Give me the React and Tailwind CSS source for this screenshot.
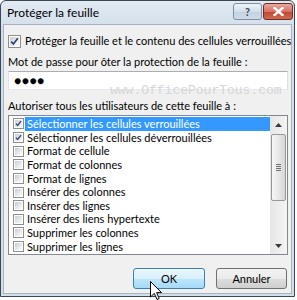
import React from "react";

function Check({ checked, size = 13 }) {
  return (
    <div
      className="shrink-0 border border-[#8e8f8f] bg-white p-[1px]"
      style={{ width: size, height: size }}
    >
      <div className="relative w-full h-full bg-[linear-gradient(135deg,#c9ccd2,#eef0f2_70%,#fbfbfb)]">
        {checked && (
          <svg
            viewBox="0 0 9 9"
            className="absolute inset-0 w-full h-full overflow-visible"
          >
            <path
              d="M1.2 4.6 L3.4 7 L7.8 1.3"
              fill="none"
              stroke="#2c3f7c"
              strokeWidth="1.6"
            />
          </svg>
        )}
      </div>
    </div>
  );
}

const items = [
  ["Sélectionner les cellules verrouillées", true, true],
  ["Sélectionner les cellules déverrouillées", true, false],
  ["Format de cellule", false, false],
  ["Format de colonnes", false, false],
  ["Format de lignes", false, false],
  ["Insérer des colonnes", false, false],
  ["Insérer des lignes", false, false],
  ["Insérer des liens hypertexte", false, false],
  ["Supprimer les colonnes", false, false],
  ["Supprimer les lignes", false, false],
];

function Arrow({ up }) {
  return (
    <svg width="7" height="4" viewBox="0 0 7 4">
      {up ? (
        <path d="M3.5 0 L7 4 L0 4 Z" fill="#3a3a3a" />
      ) : (
        <path d="M0 0 L7 0 L3.5 4 Z" fill="#3a3a3a" />
      )}
    </svg>
  );
}

export default function App() {
  return (
    <div className="relative w-[297px] h-[300px] bg-white font-['Lato',sans-serif] text-black overflow-hidden">
      <div className="w-[295px] h-[297px] border border-[#3c4650] rounded-t-[6px] bg-[linear-gradient(#e2eaf2,#d2deea_30px,#d2deea)] flex flex-col">
        {/* title bar */}
        <div className="h-[23px] flex items-start justify-between shrink-0">
          <div className="pl-[6px] pt-[4px] text-[12px] leading-[16px]">
            Protéger la feuille
          </div>
          <div className="flex gap-[1px] pr-[1px] pt-[2px]">
            <div className="w-[29px] h-[17px] rounded-[3px] border border-[#7e8fa3] bg-[linear-gradient(#eef3f8,#d3deea_50%,#c2d1e1_51%,#cfdce9)] flex items-center justify-center text-[11px] leading-none text-[#3a4a5c] font-bold">
              ?
            </div>
            <div className="w-[30px] h-[17px] rounded-[3px] border border-[#6d2b26] bg-[linear-gradient(#e9a99f,#d47366_50%,#c0452f_51%,#d06a55)] flex items-center justify-center">
              <svg width="11" height="9" viewBox="0 0 11 9">
                <path
                  d="M1.5 1 L9.5 8 M9.5 1 L1.5 8"
                  stroke="#ffffff"
                  strokeWidth="2.4"
                  strokeLinecap="square"
                />
              </svg>
            </div>
          </div>
        </div>

        {/* body */}
        <div className="relative mx-[2px] h-[270px] border border-[#a5b4c3] bg-[#f0f0f0] flex flex-col pl-[4px] text-[11px]">
          <div className="mt-[9px] h-[14px] flex items-center gap-[4px]">
            <Check checked size={13} />
            <span className="leading-[14px] whitespace-nowrap">
              Protéger la feuille et le contenu des cellules verrouillées
            </span>
          </div>
          <div className="mt-[6px] h-[15px] leading-[15px]">
            Mot de passe pour ôter la protection de la feuille :
          </div>
          <div className="mt-[2px] w-[280px] h-[19px] border border-[#abadb3] border-l-[#e2e3ea] border-r-[#dbdfe6] border-b-[#e3e9ef] bg-white flex items-center pl-[5px] text-[12px] tracking-[0.5px] leading-none">
            ●●●●
          </div>
          <div className="mt-[8px] h-[15px] leading-[15px]">
            Autoriser tous les utilisateurs de cette feuille à :
          </div>
          <div className="mt-[2px] w-[280px] h-[140px] border border-[#828790] bg-white flex">
            <div className="flex-1 pt-[1px]">
              {items.map(([label, checked, sel]) => (
                <div key={label} className="h-[13.65px] flex items-center pl-[4px]">
                  <Check checked={checked} size={11} />
                  <div
                    className={
                      "ml-[1px] flex-1 h-full pl-[2px] leading-[13.65px] whitespace-nowrap " +
                      (sel ? "bg-[#3399ff] text-white" : "")
                    }
                  >
                    {label}
                  </div>
                </div>
              ))}
            </div>
            {/* scrollbar */}
            <div className="w-[17px] h-full bg-[linear-gradient(90deg,#e6e6e6,#f4f4f4)] flex flex-col items-center">
              <div className="h-[17px] w-full flex items-center justify-center">
                <Arrow up />
              </div>
              <div className="mt-[1px] w-[15px] h-[67px] rounded-[2px] border border-[#989898] bg-[linear-gradient(90deg,#f6f6f6,#e9e9e9_45%,#d6d6d6)] flex flex-col items-center justify-center gap-[1px]">
                <div className="w-[5px] h-[1px] bg-[#6f6f6f]" />
                <div className="w-[5px] h-[1px] bg-[#6f6f6f]" />
                <div className="w-[5px] h-[1px] bg-[#6f6f6f]" />
                <div className="w-[5px] h-[1px] bg-[#6f6f6f]" />
              </div>
              <div className="flex-1" />
              <div className="h-[17px] w-full flex items-center justify-center">
                <Arrow />
              </div>
            </div>
          </div>
          <div className="mt-[13px] flex gap-[11px] pl-[125px]">
            <div className="w-[72px] h-[21px] rounded-[3px] border border-[#3c7fb1] bg-[linear-gradient(#eaf6fd,#d9f0fc_50%,#bee6fd_51%,#a7d9f5)] flex items-center justify-center leading-none">
              OK
            </div>
            <div className="w-[71px] h-[21px] rounded-[3px] border border-[#707070] bg-[linear-gradient(#f2f2f2,#ebebeb_50%,#dddddd_51%,#cfcfcf)] flex items-center justify-center leading-none">
              Annuler
            </div>
          </div>

          {/* watermark */}
          <div className="pointer-events-none absolute left-[106px] top-[59px] font-['Liberation_Mono',monospace] text-[13px] leading-[14px] text-[#d6d6d6]">
            www.OfficePourTous.com
          </div>
        </div>
      </div>

      {/* mouse cursor */}
      <svg
        className="absolute left-[150px] top-[281px]"
        width="13"
        height="20"
        viewBox="0 0 13 20"
      >
        <path
          d="M0.5 0.5 L0.5 16 L4.3 12.4 L7 18.5 L9.2 17.5 L6.6 11.6 L11.5 11.6 Z"
          fill="#ffffff"
          stroke="#000000"
          strokeWidth="1"
          strokeLinejoin="miter"
        />
      </svg>
    </div>
  );
}
